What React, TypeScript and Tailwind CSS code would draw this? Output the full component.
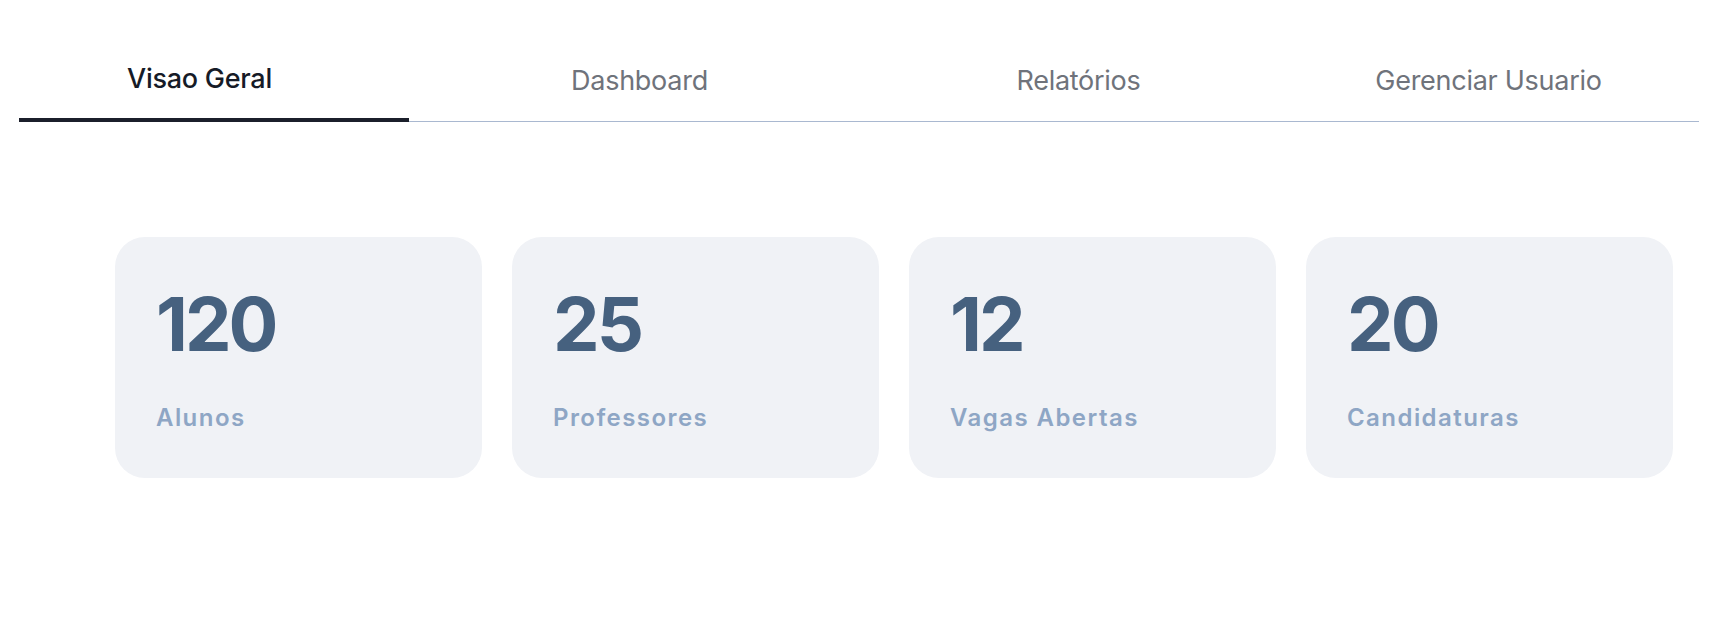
import React, { useState } from "react";

interface Stat {
  value: number;
  label: string;
}

const tabs = [
  { label: "Visao Geral", className: "w-[390px] pr-[29px]" },
  { label: "Dashboard", className: "w-[461px]" },
  { label: "Relatórios", className: "w-[417px]" },
  { label: "Gerenciar Usuario", className: "w-[412px] pr-[9px]" },
];

const stats: Stat[] = [
  { value: 120, label: "Alunos" },
  { value: 25, label: "Professores" },
  { value: 12, label: "Vagas Abertas" },
  { value: 20, label: "Candidaturas" },
];

const App: React.FC = () => {
  const [active, setActive] = useState(0);

  return (
    <div className="min-h-screen bg-white font-['Inter',sans-serif]">
      {/* Tabs */}
      <div className="ml-[19px] w-[1680px] flex border-b border-[#a9b8d0]">
        {tabs.map((tab, index) => (
          <button
            key={tab.label}
            type="button"
            onClick={() => setActive(index)}
            className={`${tab.className} pt-[63px] pb-[23px] text-[27px] leading-[32px] tracking-[-0.01em] text-center ${
              index === active
                ? "-mb-px border-b-4 border-[#1b1f2b] text-[#161b27] font-medium"
                : "text-[#6f737b]"
            }`}
          >
            {tab.label}
          </button>
        ))}
      </div>

      {/* Stats */}
      <div className="mt-[115px] pl-[115px] flex gap-[30px]">
        {stats.map((stat) => (
          <div
            key={stat.label}
            className="w-[367px] h-[241px] rounded-[30px] bg-[#f0f2f6] pt-[50px] px-[41px]"
          >
            <div className="text-[74px] leading-none font-bold tracking-[-0.04em] text-[#46617f]">
              {stat.value}
            </div>
            <div className="mt-[45px] text-[24px] leading-none font-semibold tracking-[0.06em] text-[#8ea6c5]">
              {stat.label}
            </div>
          </div>
        ))}
      </div>
    </div>
  );
};

export default App;
